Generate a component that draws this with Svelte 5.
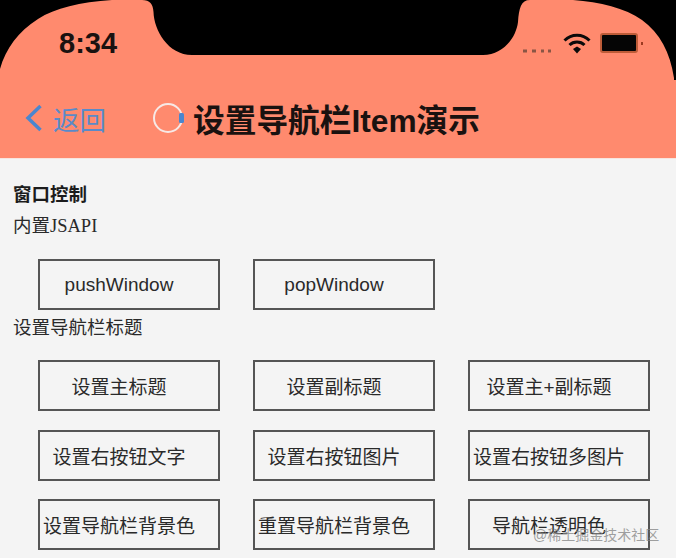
<script lang="ts">
  const sections = [
    { title: "内置JSAPI", serif: true, buttons: ["pushWindow", "popWindow"] },
    {
      title: "设置导航栏标题",
      serif: false,
      buttons: [
        "设置主标题",
        "设置副标题",
        "设置主+副标题",
        "设置右按钮文字",
        "设置右按钮图片",
        "设置右按钮多图片",
        "设置导航栏背景色",
        "重置导航栏背景色",
        "导航栏透明色",
      ],
    },
  ];
</script>

<div class="screen">
  <header class="header">
    <svg class="mask" width="676" height="82" viewBox="0 0 676 82">
      <path d="M0 0H112C80 2 55 8 38 19C18 32 6 48 0 69Z" fill="#000" />
      <path
        d="M142 0C150 0 153 4 153.500 12C154 30 168 55 192 55H483C503 55 516 38 518 22C519 8 521 0 530 0Z"
        fill="#000"
      />
      <path d="M573 0C600 2 625 8 642 20C660 33 670 52 674 78V0ZM674 0H676V80H674Z" fill="#000" />
    </svg>
    <div class="status">
      <span class="time">8:34</span>
      <div class="indicators">
        <svg class="signal" width="30" height="6" viewBox="0 0 30 6">
          <g fill="#8a5544">
            <rect x="0" y="1.500" width="4" height="3" />
            <rect x="9" y="1.500" width="4" height="3" />
            <rect x="18" y="1.500" width="3" height="3" />
            <rect x="25" y="1.500" width="3" height="3" />
          </g>
        </svg>
        <svg class="wifi" width="28" height="22" viewBox="0 0 28 22">
          <path d="M1.500 8.500C8.500 1.500 19.500 1.500 26.500 8.500" fill="none" stroke="#0a0a0a" stroke-width="3" />
          <path d="M6.500 13C10.500 9 17.500 9 21.500 13" fill="none" stroke="#0a0a0a" stroke-width="3" />
          <path d="M10 17L14 14.500L18 17L14 21.500Z" fill="#0a0a0a" />
        </svg>
        <div class="battery"></div>
        <span class="nub"></span>
      </div>
    </div>
    <nav class="nav">
      <div class="back">
        <svg width="18" height="28" viewBox="0 0 18 28">
          <path d="M15.500 2L3 14L15.500 26" fill="none" stroke="#4a86cf" stroke-width="3.500" />
        </svg>
        <span class="back-label">返回</span>
      </div>
      <svg class="spinner" width="32" height="32" viewBox="0 0 32 32">
        <circle cx="15" cy="16" r="14" fill="none" stroke="#f7e9e6" stroke-width="2" />
        <rect x="26" y="11" width="5" height="10" rx="1.500" fill="#4a86cf" />
      </svg>
      <h1 class="title">设置导航栏Item演示</h1>
    </nav>
  </header>

  <main class="content">
    <div class="heading">窗口控制</div>
    {#each sections as section}
      <div class="label" class:serif={section.serif}>{section.title}</div>
      <div class="grid">
        {#each section.buttons as text}
          <button class="btn">{text}</button>
        {/each}
      </div>
    {/each}
  </main>

  <span class="watermark">@稀土掘金技术社区</span>
</div>

<style>
  :global(body) {
    margin: 0;
    background: #f4f4f4;
  }
  .screen {
    position: relative;
    width: 676px;
    height: 558px;
    overflow: hidden;
    background: #f4f4f4;
    font-family: "Liberation Sans", "Noto Sans CJK SC", sans-serif;
    color: #222;
  }
  .header {
    position: relative;
    height: 159px;
    background: #ff8a6e;
    border-bottom: 1px solid #f8e4de;
    box-sizing: border-box;
  }
  .mask {
    position: absolute;
    top: 0;
    left: 0;
  }
  .status {
    position: relative;
    display: flex;
    align-items: center;
    justify-content: space-between;
    height: 32px;
    padding: 27px 33px 0 59px;
  }
  .time {
    font-size: 29px;
    font-weight: 700;
    color: #1a1210;
  }
  .indicators {
    display: flex;
    align-items: center;
  }
  .signal {
    margin-top: 16px;
    margin-right: 10px;
  }
  .wifi {
    margin-right: 9px;
  }
  .battery {
    width: 34px;
    height: 16px;
    background: #050505;
    border: 2px solid #bd5c38;
    border-radius: 3px;
  }
  .nub {
    width: 2px;
    height: 3px;
    margin-left: 3px;
    background: #9c3a20;
  }
  .nav {
    display: flex;
    align-items: center;
    height: 44px;
    margin-top: 37px;
    padding-left: 25px;
  }
  .back {
    display: flex;
    align-items: center;
    width: 128px;
    gap: 10px;
  }
  .back-label {
    font-size: 26.500px;
    color: #5a8ac8;
  }
  .title {
    margin: 0 0 0 8px;
    font-size: 31.700px;
    font-weight: 700;
    color: #1a1210;
    white-space: nowrap;
  }
  .content {
    padding: 23px 0 0 13px;
  }
  .heading {
    font-size: 18.500px;
    font-weight: 700;
    line-height: 26px;
    color: #1c1c1c;
  }
  .label {
    font-size: 18.500px;
    line-height: 26px;
    margin-top: 5px;
    color: #2a2a2a;
  }
  .label.serif {
    font-family: "Liberation Serif", "Noto Sans CJK SC", serif;
  }
  .grid + .label {
    margin-top: 5px;
  }
  .grid {
    display: grid;
    grid-template-columns: repeat(3, 182px);
    grid-auto-rows: 51px;
    gap: 18.500px 33px;
    padding: 21px 0 0 25px;
  }
  .label + .grid {
    padding-top: 20px;
  }
  .grid + .label + .grid {
    padding-top: 19px;
  }
  .btn {
    box-sizing: border-box;
    padding: 0 20px 0 0;
    background: transparent;
    border: 2px solid #555;
    font-family: inherit;
    font-size: 19px;
    white-space: nowrap;
    color: #2a2a2a;
  }
  .watermark {
    position: absolute;
    left: 533px;
    top: 524px;
    font-size: 14px;
    color: rgba(130, 130, 130, 0.75);
    white-space: nowrap;
  }
</style>
